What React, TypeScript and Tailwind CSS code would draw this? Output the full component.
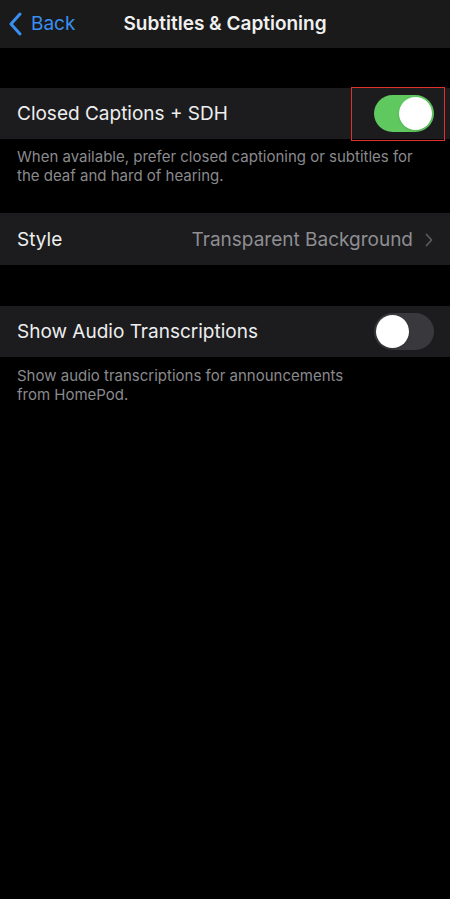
import React, { useState } from 'react';

const Toggle: React.FC<{ on: boolean; onChange: () => void }> = ({ on, onChange }) => (
    <button
        onClick={onChange}
        className={`relative block w-[60px] h-[37px] rounded-full transition-colors ${on ? 'bg-[#5fc85f]' : 'bg-[#39393d]'}`}
    >
        <span
            className={`absolute top-[2px] w-[33px] h-[33px] rounded-full bg-white shadow transition-all ${on ? 'left-[25px]' : 'left-[2px]'}`}
        />
    </button>
);

const App: React.FC = () => {
    const [captions, setCaptions] = useState(true);
    const [transcriptions, setTranscriptions] = useState(false);

    return (
        <div className="min-h-[899px] w-[450px] bg-black text-white font-['Inter','Liberation_Sans',sans-serif]">
            <div className="relative h-[48px] bg-[#1a1a1a] flex items-center">
                <button className="flex items-center gap-[8px] pl-[8px] text-[#3a8ff0]">
                    <svg width="15" height="24" viewBox="0 0 15 24" fill="none">
                        <path d="M12 2 L3 12 L12 22" stroke="currentColor" strokeWidth="3" strokeLinecap="round" strokeLinejoin="round" />
                    </svg>
                    <span className="text-[19px]">Back</span>
                </button>
                <h1 className="absolute left-1/2 -translate-x-1/2 text-[19px] font-semibold text-[#f0f0f0]">
                    Subtitles &amp; Captioning
                </h1>
            </div>

            <div className="h-[40px]" />

            <div className="h-[51px] bg-[#1c1c1e] flex items-center justify-between pl-[17px] pr-[16px]">
                <span className="text-[19px] text-[#eeeeee] pt-[2px]">Closed Captions + SDH</span>
                <div className="relative flex">
                    <Toggle on={captions} onChange={() => setCaptions(!captions)} />
                    <div className="absolute -left-[23px] -right-[11px] -top-[8px] -bottom-[9px] border border-[#e0302a] pointer-events-none" />
                </div>
            </div>
            <p className="pl-[17px] pr-[16px] pt-[8px] text-[15px] leading-[19px] text-[#8a8a8e]">
                When available, prefer closed captioning or subtitles for the deaf and hard of hearing.
            </p>

            <div className="h-[28px]" />

            <div className="h-[52px] bg-[#1c1c1e] flex items-center justify-between pl-[17px] pr-[17px]">
                <span className="text-[19px] text-[#eeeeee] pt-[2px]">Style</span>
                <div className="flex items-center gap-[12px] text-[#8e8e93] pt-[2px]">
                    <span className="text-[19px]">Transparent Background</span>
                    <svg width="8" height="14" viewBox="0 0 8 14" fill="none">
                        <path d="M1.5 1.5 L6.5 7 L1.5 12.5" stroke="#5a5a5e" strokeWidth="1.8" strokeLinecap="round" strokeLinejoin="round" />
                    </svg>
                </div>
            </div>

            <div className="h-[41px]" />

            <div className="h-[51px] bg-[#1c1c1e] flex items-center justify-between pl-[17px] pr-[16px]">
                <span className="text-[19px] text-[#eeeeee] pt-[2px]">Show Audio Transcriptions</span>
                <Toggle on={transcriptions} onChange={() => setTranscriptions(!transcriptions)} />
            </div>
            <p className="pl-[17px] pr-[80px] pt-[9px] text-[15px] leading-[19px] text-[#8a8a8e]">
                Show audio transcriptions for announcements from HomePod.
            </p>
        </div>
    );
};

export default App;
